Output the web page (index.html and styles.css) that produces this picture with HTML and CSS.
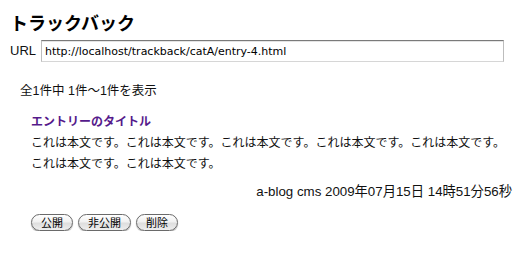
FILE: index.html
```html
<!DOCTYPE html>
<html lang="ja">
<head>
<meta charset="utf-8">
<title>トラックバック</title>
<link rel="stylesheet" href="styles.css">
</head>
<body>
<div class="page">
  <h1 class="title">トラックバック</h1>
  <div class="url-row">
    <label class="url-label" for="tb-url">URL</label>
    <input class="url-input" id="tb-url" type="text" value="http://localhost/trackback/catA/entry-4.html">
  </div>
  <p class="count">全1件中 1件〜1件を表示</p>
  <div class="entry">
    <a class="entry-title" href="#">エントリーのタイトル</a>
    <p class="entry-body">これは本文です。これは本文です。これは本文です。これは本文です。これは本文です。これは本文です。これは本文です。</p>
    <p class="entry-meta">a-blog cms 2009年07月15日 14時51分56秒</p>
    <div class="actions">
      <button class="btn" type="button">公開</button>
      <button class="btn" type="button">非公開</button>
      <button class="btn" type="button">削除</button>
    </div>
  </div>
</div>
</body>
</html>
```
FILE: styles.css
```css
html, body {
  margin: 0;
  padding: 0;
  background: #fff;
}
body {
  font-family: "Liberation Sans", "Noto Sans CJK JP", sans-serif;
  color: #111;
  font-size: 12px;
}
.page {
  padding: 11px 12px 0 10px;
}
.title {
  margin: 0;
  font-size: 18px;
  line-height: 22px;
  font-weight: bold;
  font-family: "Noto Sans CJK JP", sans-serif;
  color: #000;
}
.url-row {
  display: flex;
  align-items: center;
  margin-top: 7px;
  gap: 5px;
}
.url-label {
  font-size: 13px;
  line-height: 22px;
}
.url-input {
  box-sizing: border-box;
  width: 463px;
  height: 22px;
  margin: 0;
  padding: 0 0 0 3px;
  font-family: "DejaVu Sans", sans-serif;
  font-size: 11px;
  color: #000;
  border: 1px solid;
  border-color: #7a7a7a #bdbdbd #d6d6d6 #bdbdbd;
  box-shadow: inset 0 1px 0 #e4e4e4;
  background: #fff;
  outline: none;
}
.count {
  margin: 20px 0 0 10px;
  font-size: 12.5px;
  line-height: 18px;
}
.entry {
  margin: 11px 0 0 21px;
}
.entry-title {
  display: block;
  font-family: "Noto Sans CJK JP", sans-serif;
  font-weight: bold;
  color: #551a8b;
  text-decoration: none;
  line-height: 20px;
}
.entry-body {
  margin: 0;
  line-height: 21px;
  font-family: "Noto Sans CJK JP", sans-serif;
}
.entry-meta {
  margin: 10px 0 0;
  text-align: right;
  font-size: 13.3px;
  line-height: 18px;
}
.actions {
  display: flex;
  gap: 5px;
  margin-top: 13px;
}
.btn {
  box-sizing: border-box;
  height: 17px;
  margin: 0;
  padding: 0 9px;
  font-family: "Noto Sans CJK JP", sans-serif;
  font-size: 11px;
  line-height: 15px;
  color: #000;
  border: 1px solid #6a6a6a;
  border-radius: 9px;
  background: linear-gradient(#ffffff, #f1f1f1 45%, #dedede 55%, #eeeeee);
  box-shadow: 0 1px 1px rgba(0, 0, 0, 0.35);
}
```
